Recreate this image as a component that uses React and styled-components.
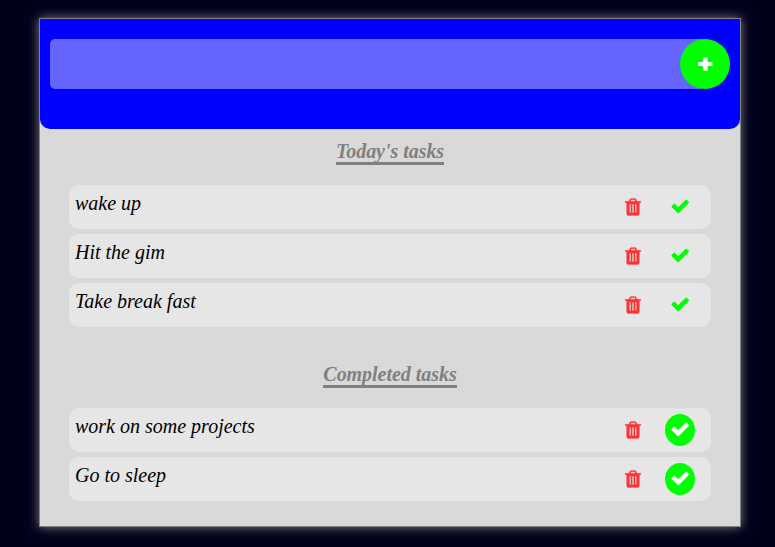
import React from "react";
import styled, { createGlobalStyle } from "styled-components";

const GlobalStyle = createGlobalStyle`
  * { box-sizing: border-box; }
  body {
    margin: 0;
    background: #00001a;
    font-family: "Liberation Serif", "Times New Roman", serif;
    overflow: hidden;
  }
`;

const Page = styled.div`
  height: 547px;
  padding-top: 18px;
  padding-left: 39px;
`;

const Card = styled.main`
  width: 702px;
  height: 509px;
  border: 1px solid #808080;
  background: #d9d9d9;
  box-shadow: 0 0 10px #808080;
`;

const Header = styled.form`
  display: flex;
  height: 110px;
  padding: 20px 10px 0;
  background: #0000ff;
  border-radius: 0 0 10px 10px;
`;

const TaskInput = styled.input`
  width: 655px;
  height: 50px;
  padding: 0 10px;
  border: none;
  border-radius: 5px;
  background: #6666ff;
  color: #fff;
  font: italic 20px "Liberation Serif", serif;
  outline: none;
`;

const AddButton = styled.button`
  display: flex;
  align-items: center;
  justify-content: center;
  width: 50px;
  height: 50px;
  margin-left: -25px;
  padding: 0;
  border: none;
  border-radius: 50%;
  background: #00ff00;
  color: #fff;
  z-index: 1;
`;

const Section = styled.section`
  height: ${(p) => p.$height}px;
  padding: 12px 29px 0;
`;

const Title = styled.h2`
  width: fit-content;
  height: 24px;
  margin: 0 auto 20px;
  border-bottom: 3px solid #808080;
  color: #808080;
  font-size: 20px;
  font-style: italic;
  font-weight: bold;
  letter-spacing: -0.04px;
  line-height: 20px;
  white-space: nowrap;
`;

const List = styled.ul`
  display: flex;
  flex-direction: column;
  gap: 5px;
  margin: 0;
  padding: 0;
  list-style: none;
`;

const Row = styled.li`
  display: flex;
  align-items: center;
  height: 44px;
  padding: 0 16px 0 6px;
  border-radius: 10px;
  background: #e6e6e6;
`;

const Label = styled.span`
  flex: 1;
  padding-bottom: 8px;
  color: #000;
  font-size: 20px;
  font-style: italic;
  line-height: 24px;
`;

const IconButton = styled.button`
  display: flex;
  align-items: center;
  justify-content: center;
  width: 30px;
  height: 32px;
  margin-left: ${(p) => (p.$spaced ? 17 : 0)}px;
  padding: 0 0 ${(p) => (p.$spaced ? 2 : 0)}px;
  border: none;
  border-radius: 50%;
  background: ${(p) => (p.$filled ? "#00ff00" : "transparent")};
  color: ${(p) => p.$color};
`;

const Icon = styled.svg`
  display: block;
  width: 20px;
  height: 20px;
  fill: currentColor;
  stroke: currentColor;
  stroke-width: ${(p) => p.$weight};
`;

const icons = {
  plus: {
    weight: 0,
    path: "M1560 750v292q0 30-30 30h-400v400q0 30-30 30h-370q-30 0-30-30v-400h-400q-30 0-30-30v-300q0-30 30-30h400v-400q0-30 30-30h370q30 0 30 30v400h400q30 0 30 38z",
  },
  check: {
    weight: 70,
    path: "M1671 566q0 30-20 50l-732 742-136 136q-20 20-48 20t-48-20l-136-136-372-372q-20-20-20-48t20-48l156-156q20-20 48-20t48 20l304 305 666-667q20-20 48-20t48 20l154 154q20 20 20 40z",
  },
  trash: {
    weight: 20,
    path: "M704 1376v-704q0-14-9-23t-23-9h-64q-14 0-23 9t-9 23v704q0 14 9 23t23 9h64q14 0 23-9t9-23zM960 1376v-704q0-14-9-23t-23-9h-64q-14 0-23 9t-9 23v704q0 14 9 23t23 9h64q14 0 23-9t9-23zM1216 1376v-704q0-14-9-23t-23-9h-64q-14 0-23 9t-9 23v704q0 14 9 23t23 9h64q14 0 23-9t9-23zM672 384h448l-48-117q-7-9-17-11h-317q-10 2-17 11zM1600 416v64q0 14-9 23t-23 9h-96v948q0 83-47 143.5t-113 60.5h-832q-66 0-113-58.5t-47-141.5v-952h-96q-14 0-23-9t-9-23v-64q0-14 9-23t23-9h309l70-167q15-37 54-63t79-26h320q40 0 79 26t54 63l70 167h309q14 0 23 9t9 23z",
  },
};

const Glyph = ({ name }) => (
  <Icon viewBox="0 0 1792 1792" $weight={icons[name].weight} aria-hidden="true">
    <path d={icons[name].path} />
  </Icon>
);

const Task = ({ text, done }) => (
  <Row>
    <Label>{text}</Label>
    <IconButton type="button" aria-label="Delete" $color="#ff3333">
      <Glyph name="trash" />
    </IconButton>
    <IconButton type="button" aria-label="Complete" $spaced $filled={done} $color={done ? "#fff" : "#00ff00"}>
      <Glyph name="check" />
    </IconButton>
  </Row>
);

const TaskSection = ({ title, tasks, done, height }) => (
  <Section $height={height}>
    <Title>{title}</Title>
    <List>
      {tasks.map((t) => (
        <Task key={t} text={t} done={done} />
      ))}
    </List>
  </Section>
);

export default function App() {
  return (
    <Page>
      <GlobalStyle />
      <Card>
        <Header>
          <TaskInput aria-label="New task" />
          <AddButton type="button" aria-label="Add task">
            <Glyph name="plus" />
          </AddButton>
        </Header>
        <TaskSection title="Today's tasks" tasks={["wake up", "Hit the gim", "Take break fast"]} height={223} />
        <TaskSection title="Completed tasks" tasks={["work on some projects", "Go to sleep"]} done height={175} />
      </Card>
    </Page>
  );
}
